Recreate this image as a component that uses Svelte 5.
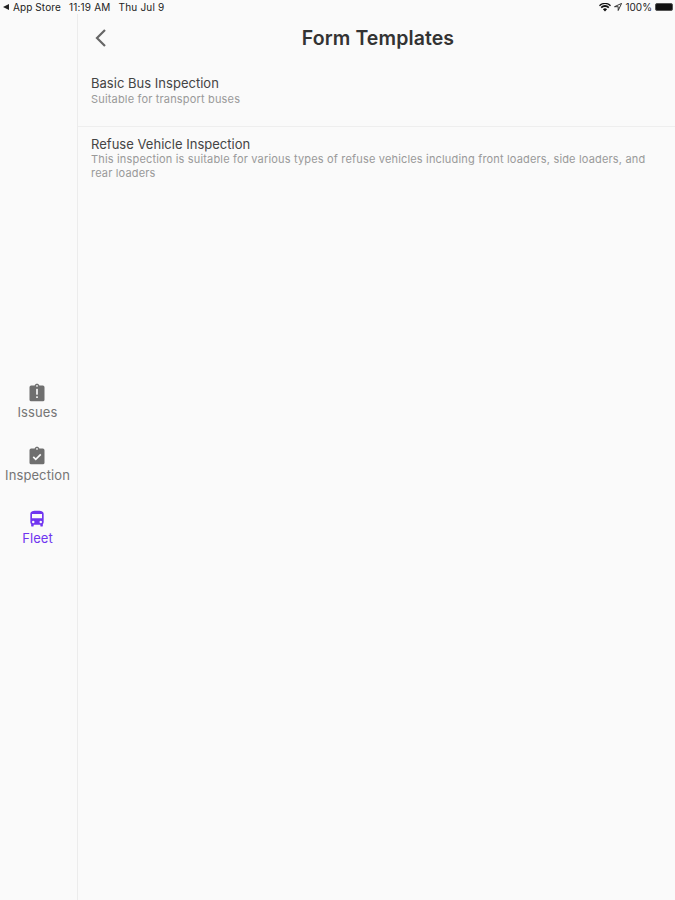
<script>
  const tabs = [
    { label: 'Issues', kind: 'issue' },
    { label: 'Inspection', kind: 'check' },
    { label: 'Fleet', kind: 'bus', active: true }
  ];
</script>

<div class="screen">
  <header class="status">
    <div class="status-left">
      <span class="back-tri"></span>
      <span class="s1">App Store</span>
      <span class="s2">11:19 AM</span>
      <span class="s3">Thu Jul 9</span>
    </div>
    <div class="status-right">
      <svg width="12" height="9" viewBox="0 0 12 9"><path d="M6 8.600 3.900 6.300a3 3 0 0 1 4.200 0zM2.800 5.200 1.600 3.900a6.300 6.300 0 0 1 8.800 0L9.200 5.200a4.600 4.600 0 0 0-6.400 0zM.9 3.200 0 2.200a8.600 8.600 0 0 1 12 0l-.9 1a7.300 7.300 0 0 0-10.200 0z" fill="#111"/></svg>
      <svg class="loc" width="8" height="8" viewBox="0 0 8 8"><path d="M7.600.4.500 3.700h3.700v3.800z" fill="none" stroke="#222" stroke-width=".9"/></svg>
      <span class="pct">100%</span>
      <span class="battery"></span>
    </div>
  </header>
  <div class="body">
    <nav class="rail">
      {#each tabs as t}
        <div class="tab" class:active={t.active}>
          <svg width="20" height="20" viewBox="0 0 24 24">
            {#if t.kind === 'issue'}
              <path d="M19 3h-4.200C14.400 1.800 13.300 1 12 1s-2.400.8-2.800 2H5a2 2 0 0 0-2 2v15a2 2 0 0 0 2 2h14a2 2 0 0 0 2-2V5a2 2 0 0 0-2-2z" fill="currentColor"/>
              <rect x="11" y="7" width="2" height="7" fill="#fafafa"/><rect x="11" y="16" width="2" height="2" fill="#fafafa"/>
              <circle cx="12" cy="3.500" r="1" fill="#fafafa"/>
            {:else if t.kind === 'check'}
              <path d="M19 3h-4.200C14.400 1.800 13.300 1 12 1s-2.400.8-2.800 2H5a2 2 0 0 0-2 2v15a2 2 0 0 0 2 2h14a2 2 0 0 0 2-2V5a2 2 0 0 0-2-2z" fill="currentColor"/>
              <path d="m7.500 13 3 3 6-6" fill="none" stroke="#fafafa" stroke-width="2"/>
              <circle cx="12" cy="3.500" r="1" fill="#fafafa"/>
            {:else}
              <path fill-rule="evenodd" d="M4 16c0 .9.400 1.700 1 2.200V20a1 1 0 0 0 1 1h1a1 1 0 0 0 1-1v-1h8v1a1 1 0 0 0 1 1h1a1 1 0 0 0 1-1v-1.800c.6-.5 1-1.300 1-2.200V6c0-3.500-3.600-4-8-4S4 2.500 4 6zm3.500 1a1.500 1.500 0 1 1 0-3 1.500 1.500 0 0 1 0 3zm9 0a1.500 1.500 0 1 1 0-3 1.500 1.500 0 0 1 0 3zM6 11V6h12v5z" fill="currentColor"/>
            {/if}
          </svg>
          <span>{t.label}</span>
        </div>
      {/each}
    </nav>
    <main class="content">
      <div class="appbar">
        <svg class="chev" width="14" height="20" viewBox="0 0 14 20"><path d="M11 2 3 10l8 8" fill="none" stroke="#666" stroke-width="2.200"/></svg>
        <h1>Form Templates</h1>
      </div>
      <div class="item first">
        <div class="title">Basic Bus Inspection</div>
        <div class="sub">Suitable for transport buses</div>
      </div>
      <div class="item second">
        <div class="title">Refuse Vehicle Inspection</div>
        <div class="sub">This inspection is suitable for various types of refuse vehicles including front loaders, side loaders, and rear loaders</div>
      </div>
    </main>
  </div>
</div>

<style>
  :global(body) { margin: 0; background: #fafafa; }
  .screen { width: 675px; height: 900px; display: flex; flex-direction: column; background: #fafafa; font-family: Roboto, "Liberation Sans", sans-serif; overflow: hidden; }
  .status { height: 14px; display: flex; justify-content: space-between; align-items: center; font: 10px Inter, "Liberation Sans", sans-serif; color: #222; }
  .status-left { display: flex; align-items: center; padding-left: 3px; }
  .back-tri { width: 0; height: 0; border: 3px solid transparent; border-right: 6px solid #222; border-left: 0; margin-right: 4px; }
  .s1 { letter-spacing: .1px; }
  .s2 { margin-left: 8px; letter-spacing: .2px; }
  .s3 { margin-left: 8px; letter-spacing: .2px; }
  .status-right { display: flex; align-items: center; gap: 3px; padding-right: 2px; }
  .battery { width: 18px; height: 8px; background: #111; border: 1px solid #555; border-radius: 2px; box-sizing: border-box; }
  .body { flex: 1; display: flex; min-height: 0; }
  .rail { width: 75px; padding: 369px 2px 0 0; border-right: 1px solid #ececec; display: flex; flex-direction: column; align-items: center; }
  .tab { height: 63px; display: flex; flex-direction: column; align-items: center; color: #6f6f6f; font: 400 13px Inter, "Liberation Sans", sans-serif; }
  .tab span { line-height: 17px; margin-top: 1px; letter-spacing: .1px; color: #757575; }
  .tab.active, .tab.active span { color: #7035f0; }
  .content { flex: 1; min-width: 0; }
  .appbar { height: 48px; position: relative; display: flex; align-items: center; justify-content: center; }
  .chev { position: absolute; left: 16px; top: 14px; }
  h1 { margin: 0 0 0 3px; font: 600 19.500px Inter, "Liberation Sans", sans-serif; color: #333; letter-spacing: .1px; }
  .item { padding: 0 13px; }
  .first { height: 65px; padding-top: 13px; border-bottom: 1px solid #eee; box-sizing: border-box; }
  .second { padding-top: 9px; }
  .title { font: 400 13px/17px Inter, "Liberation Sans", sans-serif; color: #444; letter-spacing: .02px; }
  .second .title { line-height: 16px; }
  .sub { font: 400 11px/14px Inter, "Liberation Sans", sans-serif; color: #999; letter-spacing: .17px; }
</style>
